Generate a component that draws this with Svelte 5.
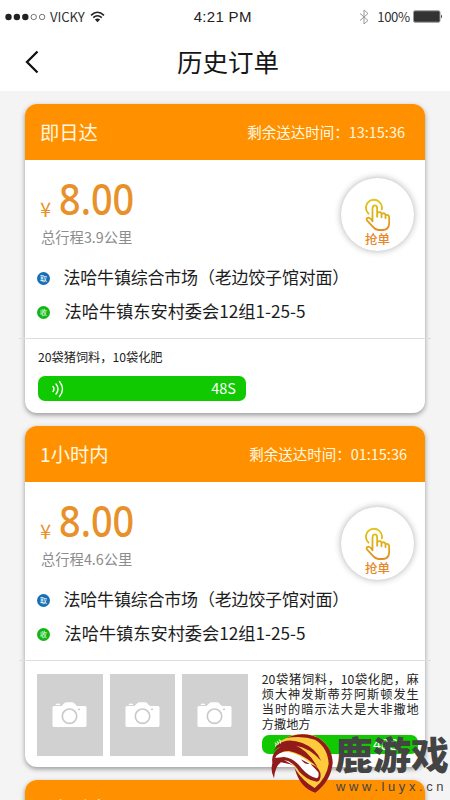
<script>
  const orders = [
    { kind: '即日达', left: '13:15:36', km: '3.9', grabTop: 18, photos: 0, note: '20袋猪饲料，10袋化肥' },
    { kind: '1小时内', left: '01:15:36', km: '4.6', grabTop: 25, photos: 3, note: '20袋猪饲料，10袋化肥，麻烦大神发斯蒂芬阿斯顿发生当时的暗示法大是大非撒地方撒地方' }
  ];
</script>

{#snippet voice()}
  <div class="voice">
    <svg class="waves" viewBox="0 0 14 18" width="14" height="18" fill="none" stroke="#fff" stroke-width="1.4" stroke-linecap="round">
      <path d="M2 6.5Q4 9 2 11.5M5 4Q9 9 5 14M8.5 1.5Q14.5 9 8.5 16.500" />
    </svg>
    <span>48S</span>
  </div>
{/snippet}

{#snippet head(o)}
  <div class="head">
    <span class="kind">{o.kind}</span>
    <span class="left" class:shift={o.photos > 0}>剩余送达时间：{o.left}</span>
  </div>
{/snippet}

<div class="screen">
  <header>
    <div class="status">
      <svg class="dots" width="42" height="8" viewBox="0 0 42 8">
        {#each [0, 1, 2, 3, 4] as i}
          <circle cx={3.5 + i * 8.4} cy="4" r={i < 3 ? 3.2 : 2.7} fill={i < 3 ? '#222' : 'none'} stroke={i < 3 ? 'none' : '#555'} stroke-width=".8" />
        {/each}
      </svg>
      <span class="carrier">VICKY</span>
      <svg class="wifi" width="15" height="12" viewBox="0 0 15 12" fill="none" stroke="#222" stroke-width="1.6">
        <path d="M1 4.300Q7.500-1.800 14 4.300M3.200 6.700Q7.500 2.800 11.800 6.700" />
        <path d="M4.900 8.600Q7.500 6.300 10.100 8.600L7.500 11.300Z" fill="#222" stroke="none" />
      </svg>
      <span class="clock">4:21 PM</span>
      <svg class="bt" width="10" height="16" viewBox="0 0 10 16" fill="none" stroke="#999" stroke-width="1">
        <path d="M1 4.500L9 11.500L5 15V1L9 4.500L1 11.500" />
      </svg>
      <span class="pct">100%</span>
      <svg class="battery" width="30" height="13" viewBox="0 0 30 13">
        <rect x=".5" y=".8" width="26.500" height="11.400" rx="1.500" fill="#333" stroke="#999" />
        <path d="M28 4.500Q30 6.500 28 8.500Z" fill="#333" />
      </svg>
    </div>
    <div class="nav">
      <svg class="back" width="14" height="24" viewBox="0 0 14 24" fill="none" stroke="#111" stroke-width="2.300">
        <path d="M12.500 1.500L2 12L12.500 22.500" />
      </svg>
      <h1>历史订单</h1>
    </div>
  </header>

  <main>
    {#each orders as o}
      <article class:tall={o.photos > 0}>
        {@render head(o)}
        <div class="body">
          <div class="price"><span class="yen">¥</span><span class="num">8.00</span></div>
          <div class="km">总行程{o.km}公里</div>
          <div class="addr from"><i>取</i><span>法哈牛镇综合市场（老边饺子馆对面）</span></div>
          <div class="addr to"><i>收</i><span>法哈牛镇东安村委会12组1-25-5</span></div>
          <button class="grab" style="top: {o.grabTop}px">
            <svg width="27" height="33" viewBox="0 0 80 99" fill="none" stroke="url(#gold)" stroke-width="5.400" stroke-linecap="round" stroke-linejoin="round">
              <defs>
                <linearGradient id="gold" gradientUnits="userSpaceOnUse" x1="0" y1="5" x2="0" y2="98">
                  <stop offset="0" stop-color="#e2c51b" />
                  <stop offset=".5" stop-color="#dcae16" />
                  <stop offset="1" stop-color="#e58a20" />
                </linearGradient>
              </defs>
              <path d="M13 47A24 24 0 1 1 53 34" />
              <path d="M25 70V32Q25 22 32 22T39 32V56M39 45Q51 38 52 49V58M52 48Q63 42 64 52V60M64 51Q75 48 75 59V76Q74 96 55 96H43Q33 95 25 85L9 68Q4 60 13 59Q19 60 25 69" />
            </svg>
            <span>抢单</span>
          </button>
        </div>
        <hr />
        {#if o.photos}
          <div class="goods">
            {#each Array(o.photos) as _}
              <div class="photo">
                <svg width="35" height="27" viewBox="0 0 35 27">
                  <path d="M2 4H9.500L12.500 1Q13.500 .3 14.500 .3H20Q21 .3 22 1L25 4H33Q34.500 4 34.500 5.500V23.500Q34.500 25 33 25H2Q.5 25 .5 23.500V5.500Q.5 4 2 4Z" fill="#fff" />
                  <path d="M3.500 2.800Q5 .8 8 2V3H3.500Z" fill="#fff" />
                  <circle cx="17.500" cy="14.200" r="7.200" fill="#fff" stroke="#cacaca" stroke-width="1.700" />
                  <circle cx="27" cy="7.300" r=".9" fill="#bbb" />
                </svg>
              </div>
            {/each}
            <div class="detail">
              <p>{o.note}</p>
              {@render voice()}
            </div>
          </div>
        {:else}
          <div class="plain">
            <p>{o.note}</p>
            {@render voice()}
          </div>
        {/if}
      </article>
    {/each}
    <article class="tall">{@render head(orders[1])}</article>
  </main>

  <div class="mark">
    <svg width="80" height="75" viewBox="0 0 240 225">
      <path d="M110 31Q185 15 219 66Q250 124 208 174L184 196Q142 174 120 126L86 94L72 50Z" fill="#ffca3c" />
      <path d="M58 97Q69 78 104 82Q138 87 193 137Q203 156 187 169Q170 165 143 139L96 104Q74 95 58 97Z" fill="#fff" />
      <path d="M92 39Q145 16 191 39Q232 67 233 113Q229 166 181 203Q135 190 119 130Q145 171 179 189Q216 157 221 116Q218 67 180 44Q142 31 92 39Z" fill="#911a1b" />
      <path d="M66 60Q96 36 142 54Q184 70 198 107Q164 69 123 62Q160 76 188 128Q146 86 102 78Q80 77 64 92L53 116Q45 87 75 67Q66 67 55 82Z" fill="#911a1b" />
      <path d="M87 96Q116 98 141 131Q161 154 186 160Q193 158 190 142Q181 131 166 117L179 122Q198 134 197 153Q195 174 180 169Q155 164 133 140Q113 108 87 105L117 122Q93 114 78 112Q60 124 57 160Q41 126 60 99Z" fill="#911a1b" />
      <path d="M138 103L163 116Q149 120 138 103Z" fill="#911a1b" />
      <path d="M60 53Q65 58 61 64M66 48Q72 54 68 60M72 44Q79 50 76 56" fill="none" stroke="#d9f5d0" stroke-width="3" />
    </svg>
    <div class="words"><b>鹿游戏</b><span>www.luyx.cn</span></div>
  </div>
</div>

<style>
  :global(body) { margin: 0; overflow: hidden; }
  * { box-sizing: border-box; }
  .screen {
    position: relative;
    width: 450px;
    height: 800px;
    overflow: hidden;
    background: #f4f4f5;
    color: #222;
    font-family: "Noto Sans CJK SC", "Noto Sans", sans-serif;
  }
  header { height: 91px; background: #fff; }
  .status { display: flex; align-items: center; height: 33px; padding: 0 7px 0 5px; }
  .status svg { flex: none; }
  .carrier { width: 36px; margin-left: 3px; font-size: 13.200px; letter-spacing: -.1px; color: #333; }
  .wifi { margin-left: 4px; }
  .clock { width: 60px; margin-left: 89px; font: 15px "Liberation Sans", sans-serif; letter-spacing: .3px; white-space: nowrap; }
  .bt { margin-left: 106px; }
  .pct { width: 34px; margin-left: 8px; font-size: 13.200px; letter-spacing: -.4px; color: #333; }
  .battery { margin-left: 2px; }
  .nav { display: flex; align-items: center; height: 58px; padding-left: 25px; }
  h1 { margin: 0 0 3px 138px; font-size: 25.500px; line-height: 36px; font-weight: 400; color: #161616; }
  main { display: flex; flex-direction: column; gap: 13px; padding: 13px 25px 0; }
  article {
    flex: none;
    height: 309px;
    border-radius: 12px;
    background: #fff;
    box-shadow: 0 2px 5px rgba(0, 0, 0, .38);
  }
  article.tall { height: 341px; }
  .head {
    display: flex;
    align-items: center;
    justify-content: space-between;
    height: 56px;
    padding: 0 20px 1px 15px;
    border-radius: 12px 12px 0 0;
    background: #ff9000;
    color: #fff8e0;
  }
  .kind { font-size: 19.300px; }
  .left { font-size: 14.500px; }
  .left.shift { margin-right: -2px; }
  .body { position: relative; height: 178px; padding: 20px 0 0 12px; }
  .price { display: flex; align-items: center; height: 44px; padding-left: 3px; color: #e8912a; }
  .yen { width: 19px; padding-top: 13px; font-size: 20px; line-height: 20px; }
  .num { margin-top: -7px; font: 500 43px/44px "Noto Sans", "Noto Sans CJK SC", sans-serif; transform: scaleX(.88); transform-origin: left; }
  .km { height: 24px; margin-top: 1px; padding-left: 4px; font-size: 14.300px; line-height: 24px; color: #8c8c8c; }
  .addr { display: flex; align-items: center; height: 34px; color: #1d1d1d; font-size: 17.200px; line-height: 34px; white-space: nowrap; }
  .from { margin-top: 12px; font-size: 17px; letter-spacing: -.2px; }
  .addr span { margin: -2px 0 0 13.500px; }
  .addr.to span { margin-left: 14.500px; }
  i { width: 13px; height: 13px; border-radius: 50%; background: #1670b5; color: #fff; font-size: 7px; font-style: normal; line-height: 13px; text-align: center; letter-spacing: 0; }
  .to i { background: #13b613; }
  .grab {
    position: absolute;
    left: 316px;
    display: flex;
    flex-direction: column;
    align-items: center;
    width: 73px;
    height: 73px;
    padding: 20px 0 0;
    border: 0;
    border-radius: 50%;
    background: #fff;
    box-shadow: 0 0 7px rgba(0, 0, 0, .32);
    color: #e58628;
    font: 500 12.500px "Noto Sans CJK SC", sans-serif;
  }
  .grab span { margin-top: -1px; line-height: 18px; }
  hr { width: 412px; height: 1px; margin: 0 -6px; border: 0; background: #dedede; }
  .plain { padding: 9px 13px 0; }
  p { margin: 0; font-size: 12.200px; line-height: 18px; }
  .voice { display: flex; align-items: center; justify-content: space-between; width: 208px; height: 25px; padding: 0 10px 0 13px; border-radius: 7px; background: #10c900; color: #fff; font-size: 14.500px; }
  .voice span { margin-top: -2px; }
  .plain .voice { margin-top: 10px; }
  .goods { display: flex; gap: 7px; padding: 13px 7px 0 12px; }
  .photo { display: flex; align-items: center; justify-content: center; flex: none; width: 65.600px; height: 82px; background: #d1d1d1; }
  .detail { flex: none; margin-left: 7px; }
  .detail p { width: 157px; height: 61px; margin-top: -2px; font-size: 12.200px; line-height: 15px; text-align: justify; text-justify: inter-character; word-break: break-all; }
  .detail .voice { width: 156px; height: 19px; margin-top: 2px; padding: 0 20px 0 10px; }
  .detail .waves { height: 11px; }
  .mark { position: absolute; left: 255px; top: 725px; display: flex; width: 200px; color: #444; }
  .mark svg { flex: none; }
  .words { display: flex; flex-direction: column; padding-top: 9px; }
  b { font-size: 38px; font-weight: 900; line-height: 38px; white-space: nowrap; }
  .words span { padding: 3px 0 0 1px; font: 13px/24px "Liberation Sans", sans-serif; letter-spacing: 3.600px; white-space: nowrap; }
</style>
